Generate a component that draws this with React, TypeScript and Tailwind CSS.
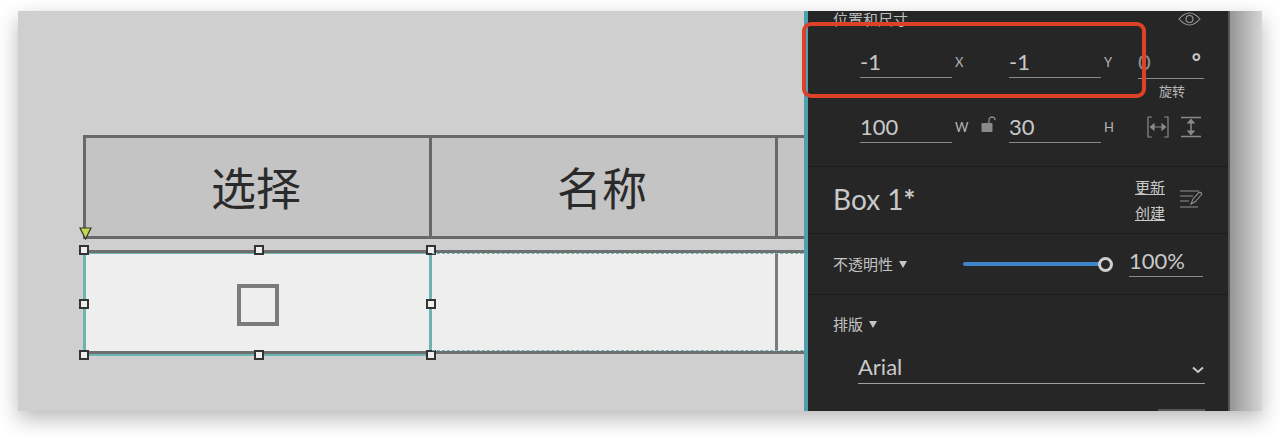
const cjk = "font-['Lato','Noto_Sans_CJK_SC',sans-serif]";

function Handle({ className }: { className: string }) {
  return <span className={`absolute h-[10px] w-[10px] border-2 border-[#333] bg-[#eee] ${className}`} />;
}

function Field({ value, width, label, className = '' }: { value: string; width: string; label: string; className?: string }) {
  return (
    <div className={`flex items-center ${className}`}>
      <div className={`flex h-[32px] items-center border-b border-[#8a8a8a] text-[22px] leading-none text-[#c9c9c9] ${width}`}>{value}</div>
      <span className="ml-[3px] w-[14px] text-[13px] leading-none text-[#b5b5b5]">{label}</span>
    </div>
  );
}

function Caret() {
  return <span className="ml-[6px] inline-block h-0 w-0 border-x-[4px] border-t-[7px] border-x-transparent border-t-[#c4c4c4]" />;
}

function HeaderCell({ children, className }: { children?: string; className: string }) {
  return <div className={`flex items-center justify-center border-r-[3px] border-[#686868] pr-[3px] pt-[4px] text-[45px] leading-none text-[#2a2a2a] ${className}`}>{children}</div>;
}

function Canvas() {
  return (
    <div className="relative flex-1 overflow-hidden bg-[#cfcfcf] pl-[65px] pt-[124px]">
      <div className="flex h-[104px] w-[760px] border-y-[3px] border-l-[3px] border-[#686868] bg-[#c4c4c4]">
        <HeaderCell className="w-[346px]">选择</HeaderCell>
        <HeaderCell className="w-[346px]">名称</HeaderCell>
      </div>
      <div className="relative mt-[11px] flex h-[104px] w-[760px] border-y-[3px] border-[#6f6f6f] bg-[#eee]">
        <div className="relative flex w-[349px] items-center justify-center border-x-[3px] border-t border-[#6cb4b2] pt-[4px]">
          <div className="h-[42px] w-[42px] border-[4px] border-[#7b7b7b]" />
          <span className="absolute inset-x-0 -bottom-[5px] h-[2px] bg-[#6cb4b2]" />
          <Handle className="-left-[7px] -top-[9px]" />
          <Handle className="left-[168px] -top-[9px]" />
          <Handle className="-right-[7px] -top-[9px]" />
          <Handle className="-left-[7px] top-[45px]" />
          <Handle className="-right-[7px] top-[45px]" />
          <Handle className="-left-[7px] -bottom-[9px]" />
          <Handle className="left-[168px] -bottom-[9px]" />
          <Handle className="-right-[7px] -bottom-[9px]" />
        </div>
        <div className="w-[346px] border-r-[3px] border-[#7b7b7b]" />
        <div className="pointer-events-none absolute inset-y-0 left-[349px] right-0 border-y border-dashed border-[#6cb4b2]" />
      </div>
      <svg className="absolute left-[61px] top-[216px]" width="13" height="13" viewBox="0 0 13 13">
        <polygon points="1,1 12,1 6.5,12" fill="#c9d84a" stroke="#333" strokeWidth="1.2" />
      </svg>
    </div>
  );
}

function Panel() {
  return (
    <div className="flex w-[426px] flex-col overflow-hidden border-l-[4px] border-r-2 border-l-[#4f9fb1] border-r-[#555] bg-[#262626] text-[#c9c9c9]">
      <section className="h-[156px] border-b border-[#1b1b1b] pl-[25px]">
        <div className="flex h-[15px] items-center justify-between pr-[27px]">
          <span className="mt-[2px] text-[15px] leading-none text-[#bdbdbd]">位置和尺寸</span>
          <svg width="23" height="14" viewBox="0 0 23 14" fill="none" stroke="#9a9a9a" strokeWidth="1.1">
            <path d="M1 7C5 2.5 8 1 11.500 1S18 2.500 22 7C18 11.500 15 13 11.500 13S5 11.500 1 7Z" />
            <circle cx="11.500" cy="7" r="3.500" />
          </svg>
        </div>
        <div className="mt-[20px] flex items-start pl-[27px]">
          <Field value="-1" label="X" width="w-[92px]" />
          <Field value="-1" label="Y" width="w-[92px]" className="ml-[40px]" />
          <div className="ml-[20px] w-[66px]">
            <div className="flex h-[33px] items-center justify-between border-b border-[#8a8a8a] pr-[3px] text-[22px] leading-none">
              <span className="text-[#8f8f8f]">0</span>
              <span className="font-bold">°</span>
            </div>
            <div className="mt-[3px] pl-[21px] text-[13px] leading-[18px] text-[#b5b5b5]">旋转</div>
          </div>
        </div>
        <div className="mt-[11px] flex items-center pl-[27px]">
          <Field value="100" label="W" width="w-[92px]" />
          <svg className="mb-[5px] ml-[12px] mr-[13px]" width="15" height="17" viewBox="0 0 15 17" fill="none">
            <rect x="0.500" y="7" width="11" height="9" rx="1" fill="#8a8a8a" />
            <path d="M8 7V4C8 2 9.500 1 11 1S14 2 14 4" stroke="#8a8a8a" strokeWidth="1.300" />
          </svg>
          <Field value="30" label="H" width="w-[92px]" />
          <svg className="ml-[29px]" width="22" height="22" viewBox="0 0 22 22" fill="none" stroke="#8a8a8a" strokeWidth="1.200">
            <path d="M5 1H1V21H5M17 1H21V21H17M4 11H18" />
            <path d="M7 8L3.500 11L7 14ZM15 8L18.500 11L15 14Z" fill="#8a8a8a" />
          </svg>
          <svg className="ml-[11px]" width="22" height="22" viewBox="0 0 22 22" fill="none" stroke="#8a8a8a" strokeWidth="1.200">
            <path d="M1 1.500H21M1 20.500H21M11 4V18" strokeWidth="1.500" />
            <path d="M8 7L11 3.500L14 7ZM8 15L11 18.500L14 15Z" fill="#8a8a8a" />
          </svg>
        </div>
      </section>

      <section className="flex h-[67px] items-center justify-between border-b border-[#1b1b1b] pl-[25px] pr-[25px]">
        <span className="pb-[3px] text-[28px] leading-none text-[#c9c9c9]">Box 1<span className="font-bold">*</span></span>
        <div className="flex items-center gap-[14px]">
          <div className="flex flex-col items-center gap-[6px] text-[15px] leading-[20px] text-[#c9c9c9] underline">
            <span>更新</span>
            <span>创建</span>
          </div>
          <svg width="24" height="22" viewBox="0 0 24 22" fill="none" stroke="#8f8f8f" strokeWidth="1.100">
            <path d="M1 2H20M1 7H14M1 12H10M1 18H19" />
            <path d="M12 15L14 10L20 3.500C21 2.500 23.500 4.500 22.500 5.500L16.500 12.500Z" />
          </svg>
        </div>
      </section>

      <section className="flex h-[61px] items-center border-b border-[#1b1b1b] pl-[25px]">
        <span className="w-[60px] text-[15px] leading-none text-[#c4c4c4]">不透明性</span>
        <Caret />
        <div className="relative ml-[56px] h-[4px] w-[142px] rounded-full bg-[#3f85c9]">
          <span className="absolute -right-[8px] -top-[5px] h-[15px] w-[15px] rounded-full border-[3px] border-[#cfcfcf] bg-[#262626]" />
        </div>
        <div className="mb-[6px] ml-[24px] flex h-[32px] w-[74px] items-center border-b border-[#8a8a8a] text-[22px] leading-none">100%</div>
      </section>

      <section className="relative flex-1 pl-[25px] pt-[22px]">
        <div className="flex items-center">
          <span className="text-[15px] leading-none text-[#c4c4c4]">排版</span>
          <Caret />
        </div>
        <div className="ml-[25px] mr-[23px] mt-[14px] flex h-[38px] items-center justify-between border-b border-[#a0a0a0] text-[22px] leading-none">
          <span className="pt-[4px]">Arial</span>
          <svg className="mt-[10px]" width="14" height="8" viewBox="0 0 14 8" fill="none" stroke="#c9c9c9" strokeWidth="2">
            <path d="M2 1.500L7 6L12 1.500" />
          </svg>
        </div>
        <div className="absolute bottom-0 right-[23px] h-[2px] w-[47px] bg-[#555]" />
      </section>
    </div>
  );
}

export default function App() {
  return (
    <div className={`h-[437px] w-[1280px] overflow-hidden bg-white pl-[18px] pt-[11px] ${cjk}`}>
      <div className="relative flex h-[400px] w-[1244px] shadow-[0_8px_20px_rgba(0,0,0,0.28)]">
        <Canvas />
        <Panel />
        <div className="w-[32px] bg-gradient-to-r from-[#969696] to-[#d6d6d6]" />
        <div className="absolute left-[784px] top-[11px] h-[76px] w-[344px] rounded-[9px] border-[4px] border-[#dd4228]" />
      </div>
    </div>
  );
}
